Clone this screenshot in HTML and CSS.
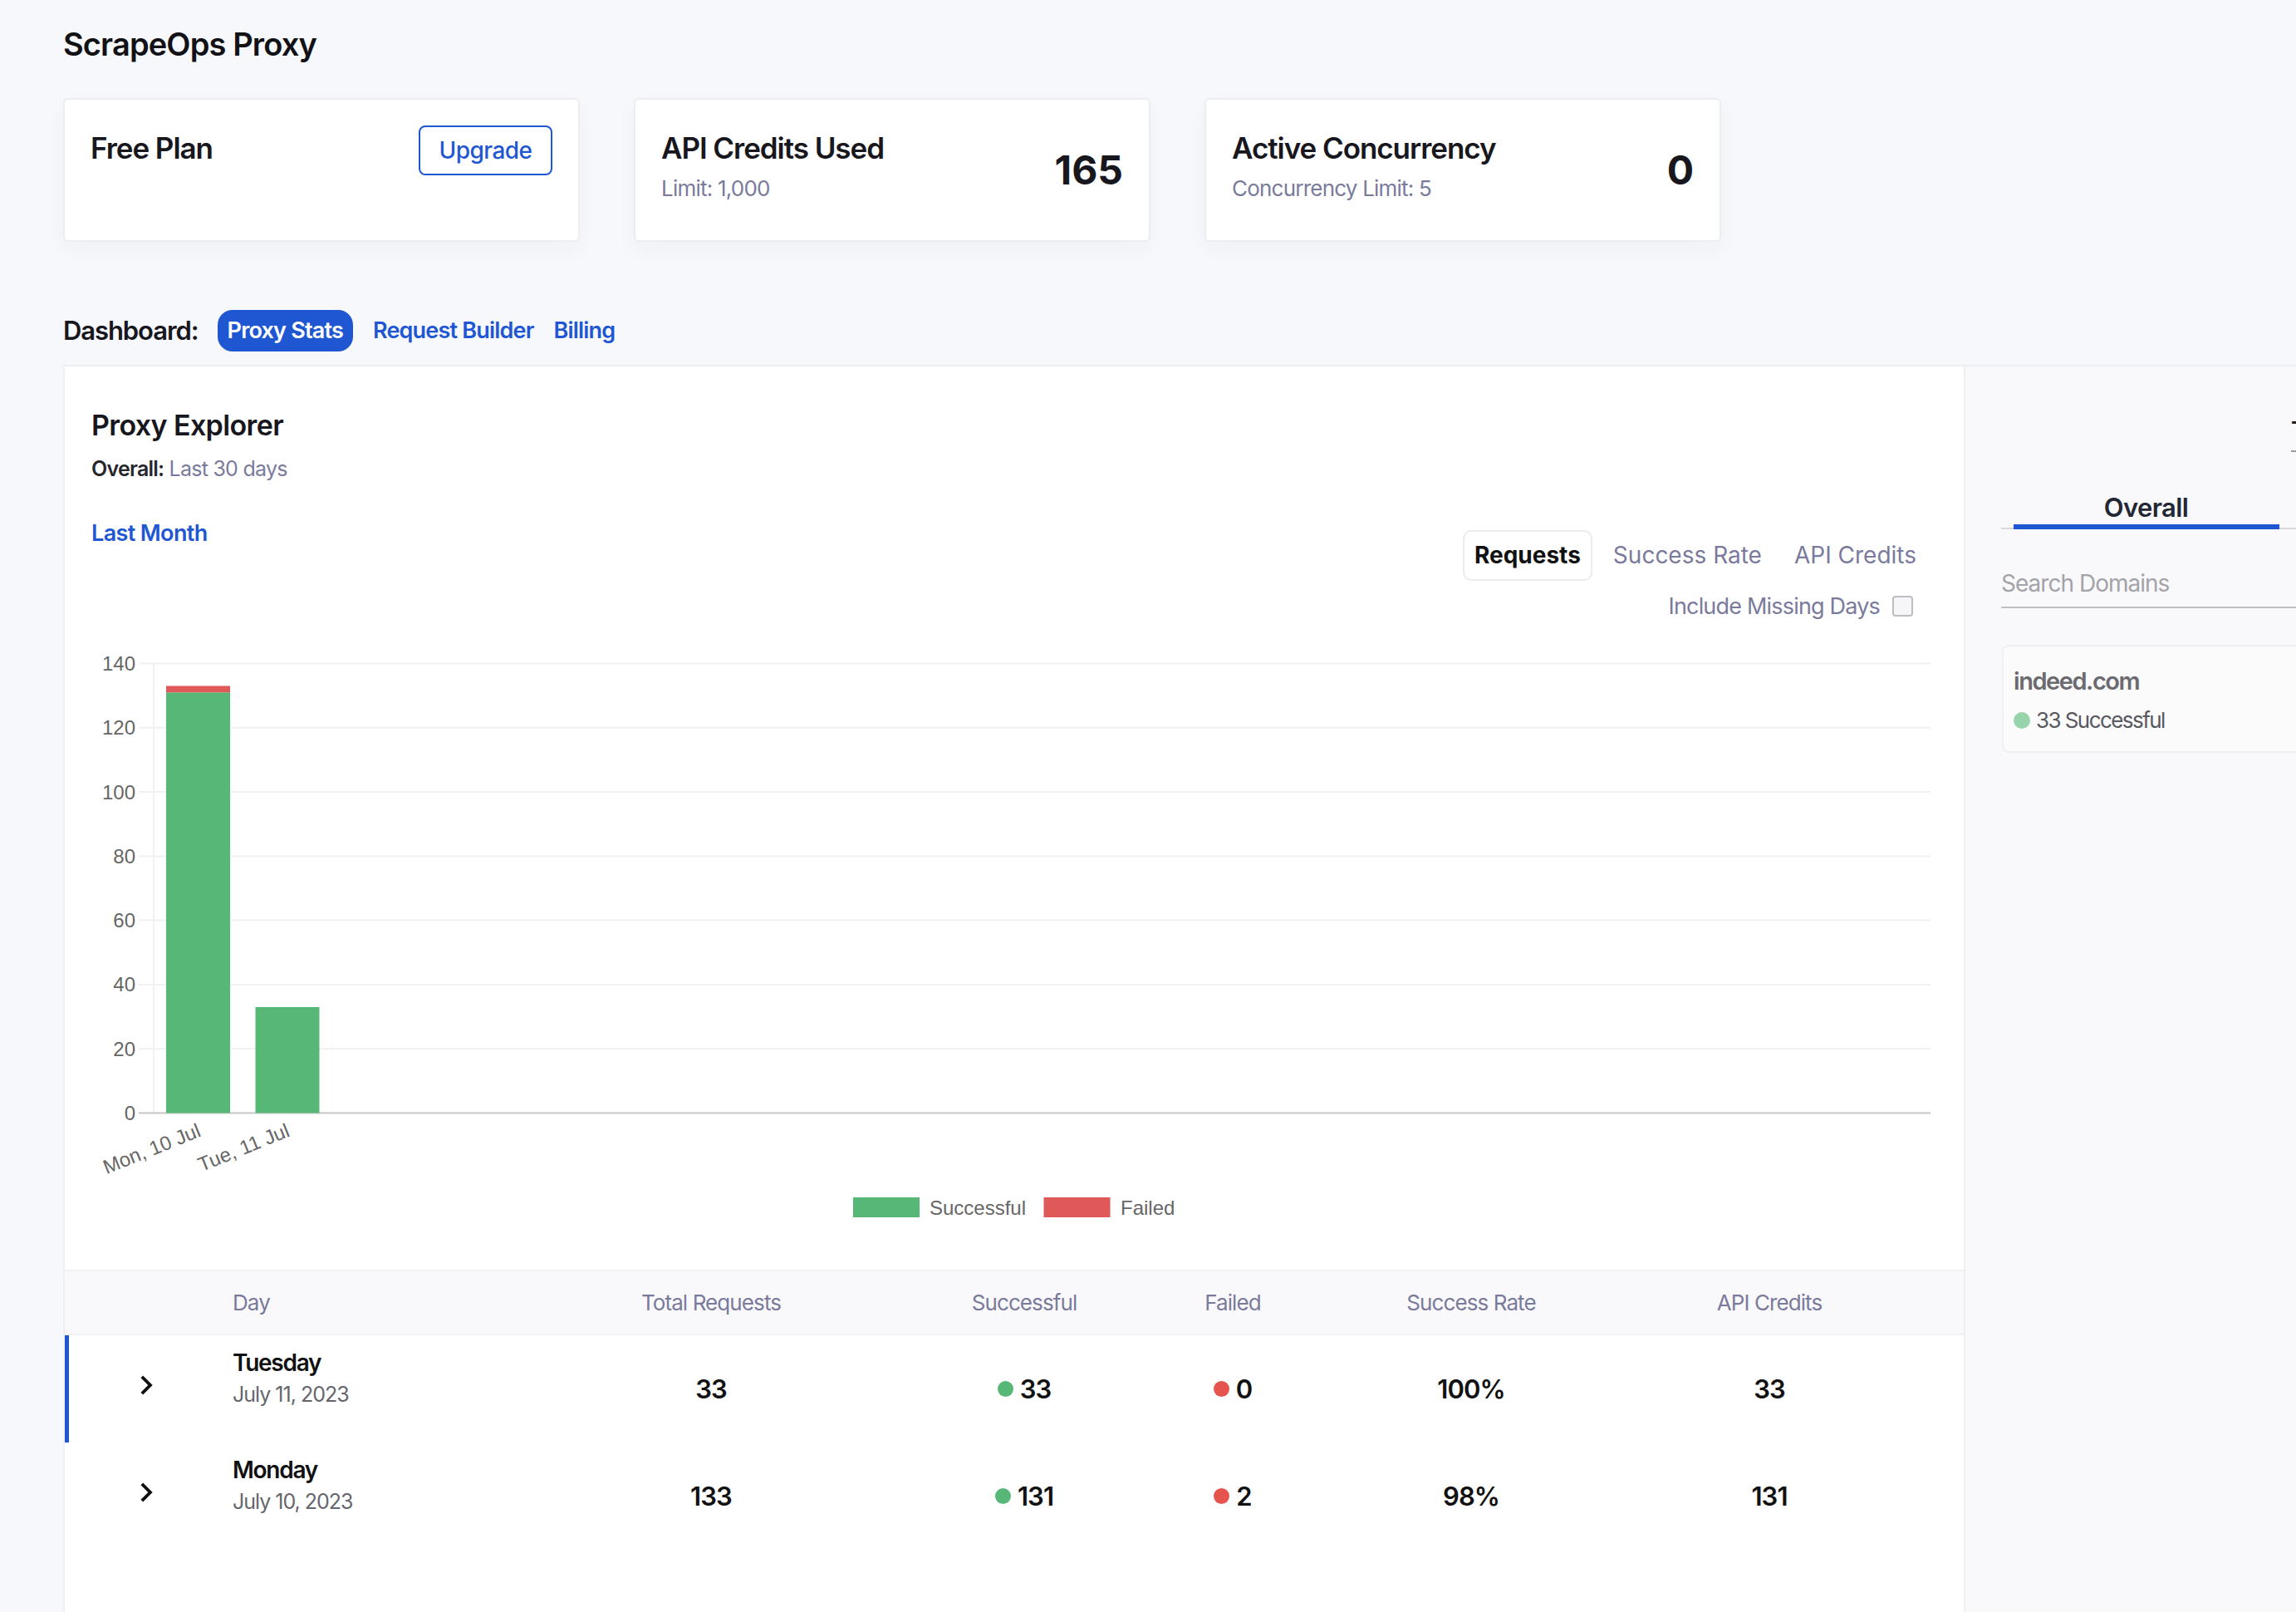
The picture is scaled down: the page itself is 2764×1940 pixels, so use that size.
FILE: index.html
```html
<!DOCTYPE html>
<html>
<head>
<meta charset="utf-8">
<title>ScrapeOps Proxy</title>
<link rel="stylesheet" href="styles.css">
</head>
<body>
<div class="page">
  <h1 class="title">ScrapeOps Proxy</h1>

  <div class="cards">
    <div class="card card-plan">
      <div class="card-title plan-title">Free Plan</div>
      <button class="btn-upgrade">Upgrade</button>
    </div>
    <div class="card card-stat">
      <div class="stat-info">
        <div class="card-title">API Credits Used</div>
        <div class="card-sub">Limit: 1,000</div>
      </div>
      <div class="stat-value">165</div>
    </div>
    <div class="card card-stat">
      <div class="stat-info">
        <div class="card-title">Active Concurrency</div>
        <div class="card-sub">Concurrency Limit: 5</div>
      </div>
      <div class="stat-value">0</div>
    </div>
  </div>

  <div class="dash-nav">
    <span class="dash-label">Dashboard:</span>
    <a class="nav-link active">Proxy Stats</a>
    <a class="nav-link">Request Builder</a>
    <a class="nav-link">Billing</a>
  </div>

  <div class="workspace">
    <section class="explorer">
      <div class="explorer-head">
        <h2 class="ex-title">Proxy Explorer</h2>
        <p class="overall"><b>Overall:</b> <span>Last 30 days</span></p>
        <div class="controls">
          <a class="range">Last Month</a>
          <div class="controls-right">
            <div class="toggles">
              <span class="toggle active">Requests</span>
              <span class="toggle">Success Rate</span>
              <span class="toggle">API Credits</span>
            </div>
            <label class="missing">Include Missing Days <span class="checkbox"></span></label>
          </div>
        </div>
        <svg class="chart" width="2218" height="730" viewBox="0 0 2218 730">
          <g class="grid">
            <line x1="57" y1="28.5" x2="2214" y2="28.5"/>
            <line x1="57" y1="105.8" x2="2214" y2="105.8"/>
            <line x1="57" y1="183.1" x2="2214" y2="183.1"/>
            <line x1="57" y1="260.4" x2="2214" y2="260.4"/>
            <line x1="57" y1="337.6" x2="2214" y2="337.6"/>
            <line x1="57" y1="414.9" x2="2214" y2="414.9"/>
            <line x1="57" y1="492.2" x2="2214" y2="492.2"/>
            <line x1="75" y1="28.5" x2="75" y2="569.5"/>
          </g>
          <line class="axis" x1="57" y1="569.5" x2="2214" y2="569.5"/>
          <g class="ylabels">
            <text x="53" y="28.5">140</text>
            <text x="53" y="105.8">120</text>
            <text x="53" y="183.1">100</text>
            <text x="53" y="260.4">80</text>
            <text x="53" y="337.6">60</text>
            <text x="53" y="414.9">40</text>
            <text x="53" y="492.2">20</text>
            <text x="53" y="569.5">0</text>
          </g>
          <rect class="bar-ok" x="90" y="63.3" width="77" height="506.2"/>
          <rect class="bar-fail" x="90" y="55.5" width="77" height="7.8"/>
          <rect class="bar-ok" x="197.5" y="442" width="77" height="127.5"/>
          <g class="xlabels">
            <text transform="translate(130 589) rotate(-22)">Mon, 10 Jul</text>
            <text transform="translate(237 589) rotate(-22)">Tue, 11 Jul</text>
          </g>
          <g class="legend">
            <rect class="bar-ok" x="917" y="671" width="80" height="24"/>
            <text x="1009" y="683">Successful</text>
            <rect class="bar-fail" x="1146.5" y="671" width="80" height="24"/>
            <text x="1239" y="683">Failed</text>
          </g>
        </svg>
      </div>

      <div class="table">
        <div class="thead">
          <div></div>
          <div class="c-day">Day</div>
          <div class="c-mid">Total Requests</div>
          <div class="c-mid">Successful</div>
          <div class="c-mid">Failed</div>
          <div class="c-mid">Success Rate</div>
          <div class="c-mid">API Credits</div>
        </div>
        <div class="trow selected">
          <div class="c-chev"><svg width="46" height="46" viewBox="0 0 24 24"><path d="M10 6L8.59 7.41 13.17 12l-4.58 4.59L10 18l6-6z"/></svg></div>
          <div class="c-day day-cell">
            <div class="day-name">Tuesday</div>
            <div class="day-date">July 11, 2023</div>
          </div>
          <div class="num">33</div>
          <div class="num"><span class="dot dot-ok"></span>33</div>
          <div class="num"><span class="dot dot-fail"></span>0</div>
          <div class="num">100%</div>
          <div class="num">33</div>
        </div>
        <div class="trow">
          <div class="c-chev"><svg width="46" height="46" viewBox="0 0 24 24"><path d="M10 6L8.59 7.41 13.17 12l-4.58 4.59L10 18l6-6z"/></svg></div>
          <div class="c-day day-cell">
            <div class="day-name">Monday</div>
            <div class="day-date">July 10, 2023</div>
          </div>
          <div class="num">133</div>
          <div class="num"><span class="dot dot-ok"></span>131</div>
          <div class="num"><span class="dot dot-fail"></span>2</div>
          <div class="num">98%</div>
          <div class="num">131</div>
        </div>
      </div>
    </section>

    <aside class="domains">
      <div class="top-tab">Today</div>
      <div class="dtabs">
        <div class="dtab active">Overall</div>
      </div>
      <input class="search" type="text" placeholder="Search Domains">
      <div class="dcard">
        <div class="dname">indeed.com</div>
        <div class="dstat"><span class="dot-light"></span>33 Successful</div>
      </div>
    </aside>
  </div>
</div>
</body>
</html>
```

FILE: styles.css
```css
html, body {
  margin: 0;
  padding: 0;
  overflow: hidden;
}
body {
  width: 2764px;
  height: 1940px;
  background: #f7f8fb;
  font-family: Inter, "Noto Sans", "Liberation Sans", sans-serif;
  color: #1b1b22;
}
.page {
  padding-left: 76px;
}
.title {
  margin: 0;
  padding-top: 31px;
  font-size: 38px;
  line-height: 1.2;
  font-weight: 600;
  letter-spacing: -0.023em;
  color: #111116;
}

/* cards */
.cards {
  display: flex;
  gap: 65px;
  margin-top: 41px;
}
.card {
  flex: none;
  width: 622px;
  height: 173px;
  box-sizing: border-box;
  background: #fff;
  border: 2px solid #ececf1;
  border-radius: 6px;
  box-shadow: 0 10px 26px rgba(40, 50, 90, 0.035);
  display: flex;
  justify-content: space-between;
}
.card-plan {
  padding: 31px;
  align-items: flex-start;
}
.plan-title {
  margin-top: 6px;
}
.card-title {
  font-size: 35px;
  line-height: 42px;
  font-weight: 600;
  letter-spacing: -0.03em;
  color: #17171d;
}
.card-sub {
  margin-top: 8px;
  font-size: 26px;
  line-height: 39px;
  letter-spacing: -0.03em;
  color: #7a7a9c;
}
.btn-upgrade {
  width: 161px;
  height: 60px;
  box-sizing: border-box;
  border: 2px solid #1f57d3;
  border-radius: 8px;
  background: #fff;
  color: #1f57d3;
  font-family: inherit;
  font-size: 28px;
  font-weight: 500;
  letter-spacing: -0.02em;
  padding: 0;
}
.card-stat {
  padding: 0 31px;
  align-items: center;
}
.stat-info {
  margin-bottom: 6px;
}
.stat-value {
  font-size: 48px;
  font-weight: 700;
  color: #17171d;
}

/* dashboard nav */
.dash-nav {
  display: flex;
  align-items: center;
  height: 50px;
  margin-top: 82px;
}
.dash-label {
  font-size: 31px;
  font-weight: 600;
  letter-spacing: -0.035em;
  color: #17171d;
  margin-right: 23px;
}
.nav-link {
  font-size: 27px;
  font-weight: 600;
  letter-spacing: -0.03em;
  color: #1f57d3;
  margin-left: 24px;
}
.nav-link.active {
  margin-left: 0;
  height: 50px;
  display: flex;
  align-items: center;
  padding: 0 12px;
  border-radius: 18px;
  background: #1f57d3;
  color: #fff;
}

/* workspace */
.workspace {
  display: flex;
  margin-top: 16px;
  border-top: 2px solid #eceef3;
}
.explorer {
  flex: none;
  width: 2288px;
  box-sizing: border-box;
  background: #fff;
  border-left: 2px solid #eef0f4;
  padding-bottom: 110px;
}
.explorer-head {
  padding: 51px 36px 0 32px;
}
.ex-title {
  margin: 0;
  font-size: 34px;
  line-height: 1.2;
  font-weight: 600;
  letter-spacing: -0.018em;
  color: #17171d;
}
.overall {
  margin: 14px 0 0;
  font-size: 25px;
  line-height: 1.5;
  letter-spacing: -0.03em;
}
.overall b {
  font-weight: 600;
  color: #26262c;
}
.overall span {
  color: #7a7a9c;
}
.controls {
  display: flex;
  justify-content: space-between;
  align-items: flex-start;
  margin-top: 38px;
}
.range {
  font-size: 27px;
  line-height: 1.5;
  font-weight: 600;
  letter-spacing: -0.023em;
  color: #1f57d3;
}
.controls-right {
  margin-top: 16px;
  margin-right: 7px;
  display: flex;
  flex-direction: column;
  align-items: flex-end;
}
.toggles {
  display: flex;
  gap: 11px;
}
.toggle {
  height: 61px;
  box-sizing: border-box;
  display: flex;
  align-items: center;
  padding: 0 12px;
  border: 2px solid transparent;
  border-radius: 10px;
  font-size: 28px;
  color: #7a7a9c;
}
.toggle.active {
  border-color: #ececef;
  color: #111;
  font-weight: 700;
}
.missing {
  margin-top: 11px;
  margin-right: 18px;
  display: flex;
  align-items: center;
  gap: 15px;
  font-size: 27px;
  line-height: 40px;
  letter-spacing: -0.03em;
  color: #7a7a9c;
}
.checkbox {
  width: 25px;
  height: 25px;
  box-sizing: border-box;
  border: 2px solid #bdbdc3;
  border-radius: 4px;
  background: #f6f6f8;
}

/* chart */
.chart {
  display: block;
  margin-top: 20px;
  font-family: "Liberation Sans", Arial, sans-serif;
}
.grid line {
  stroke: #f1f1f1;
  stroke-width: 2;
}
.axis {
  stroke: #c6c6c6;
  stroke-width: 2;
}
.ylabels text {
  font-size: 24px;
  fill: #666;
  text-anchor: end;
  dominant-baseline: central;
}
.xlabels text {
  font-size: 24px;
  fill: #666;
  text-anchor: end;
  dominant-baseline: central;
}
.legend text {
  font-size: 24px;
  fill: #666;
  dominant-baseline: central;
}
.bar-ok {
  fill: #57b777;
}
.bar-fail {
  fill: #e05959;
}

/* table */
.table {
  margin-top: 28px;
}
.thead,
.trow {
  display: grid;
  grid-template-columns: 196px 294px 576px 178px 324px 250px 468px;
  align-items: center;
}
.thead {
  height: 79px;
  box-sizing: border-box;
  background: #f9f9fb;
  border-top: 2px solid #f1f1f4;
  border-bottom: 2px solid #f1f1f4;
  font-size: 26px;
  letter-spacing: -0.035em;
  color: #7a7a9c;
}
.c-day {
  padding-left: 6px;
}
.c-mid {
  text-align: center;
}
.trow {
  height: 129px;
}
.trow.selected {
  box-shadow: inset 5px 0 0 #1f57d3;
}
.c-chev {
  display: flex;
  justify-content: center;
  align-items: center;
  margin-bottom: 8px;
}
.c-chev path {
  fill: #111;
}
.day-cell {
  padding-bottom: 25px;
}
.day-name {
  font-size: 28px;
  line-height: 1.4;
  font-weight: 600;
  letter-spacing: -0.045em;
  color: #111;
}
.day-date {
  font-size: 25px;
  line-height: 1.5;
  letter-spacing: -0.04em;
  color: #66666d;
}
.num {
  display: flex;
  justify-content: center;
  align-items: center;
  gap: 8px;
  font-size: 31px;
  font-weight: 600;
  letter-spacing: -0.03em;
  color: #111;
}
.dot {
  width: 19px;
  height: 19px;
  border-radius: 50%;
}
.dot-ok {
  background: #57b777;
}
.dot-fail {
  background: #e5554d;
}

/* domains panel */
.domains {
  flex: none;
  width: 700px;
  box-sizing: border-box;
  background: #f9f9fb;
  border-left: 2px solid #efeff3;
  padding: 61px 0 0 43px;
}
.top-tab {
  margin-left: 349px;
  font-size: 28px;
  line-height: 33.6px;
  font-weight: 600;
  color: #222;
  padding-bottom: 7px;
  border-bottom: 2px solid #999;
}
.dtabs {
  margin-top: 48px;
  display: flex;
  border-bottom: 2px solid #d9d9dd;
}
.dtab {
  position: relative;
  width: 349px;
  text-align: center;
  font-size: 31px;
  line-height: 1.2;
  font-weight: 600;
  letter-spacing: -0.02em;
  color: #222733;
  padding-bottom: 6px;
}
.dtab.active::after {
  content: "";
  position: absolute;
  left: 15px;
  right: 14px;
  bottom: -2px;
  height: 6px;
  background: #1f57d3;
}
.search {
  display: block;
  width: 100%;
  box-sizing: border-box;
  margin-top: 48px;
  height: 46.6px;
  padding: 0 0 11px;
  border: none;
  border-bottom: 2px solid #bfbfc3;
  background: transparent;
  font-family: inherit;
  font-size: 28px;
  letter-spacing: -0.035em;
  outline: none;
}
.search::placeholder {
  color: #a3a3a8;
}
.dcard {
  margin-top: 44px;
  margin-left: 1px;
  width: 640px;
  height: 130px;
  box-sizing: border-box;
  background: #fbfbfc;
  border: 2px solid #f0f0f3;
  border-radius: 8px;
  padding: 25px 12px 0;
}
.dname {
  font-size: 29px;
  line-height: 1.2;
  font-weight: 600;
  letter-spacing: -0.05em;
  color: #6a6a70;
}
.dstat {
  margin-top: 11px;
  display: flex;
  align-items: center;
  gap: 7px;
  font-size: 26px;
  line-height: 1.4;
  letter-spacing: -0.06em;
  color: #58585e;
}
.dot-light {
  width: 20px;
  height: 20px;
  border-radius: 50%;
  background: #97d4ac;
}
```
